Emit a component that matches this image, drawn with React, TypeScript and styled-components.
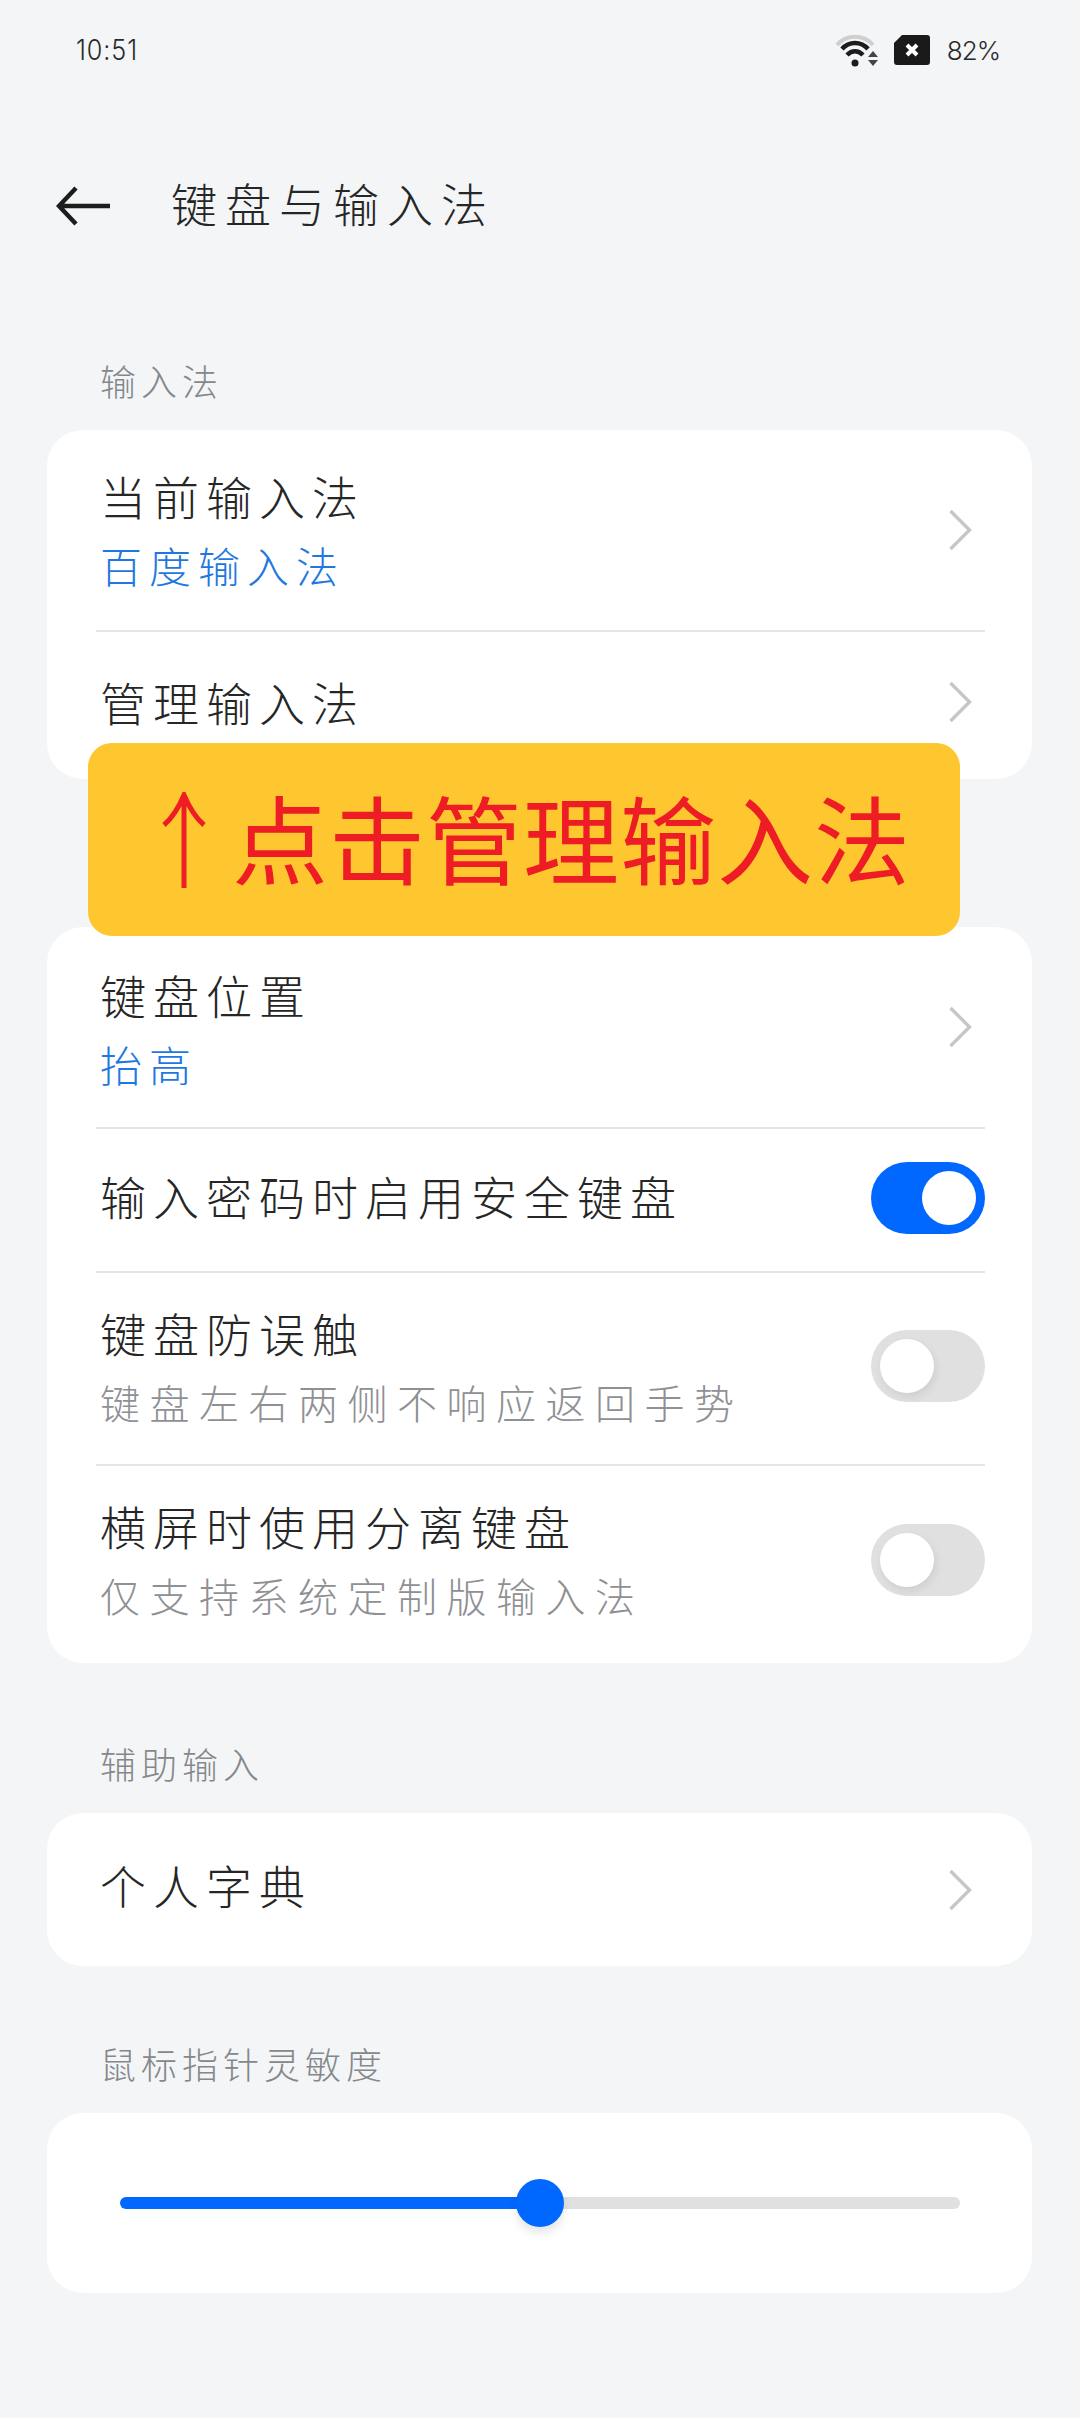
import React from "react";
import styled, { createGlobalStyle } from "styled-components";

const GlobalStyle = createGlobalStyle`
  html, body { margin: 0; padding: 0; background: #f3f5f7; }
  * { box-sizing: border-box; }
`;

const CJK = `"Noto Sans CJK SC", "Noto Sans", sans-serif`;

const Page = styled.div`
  position: relative;
  width: 1080px;
  height: 2418px;
  overflow: hidden;
  background: #f3f5f7;
  font-family: ${CJK};
  font-weight: 300;
`;

const StatusBar = styled.div`
  height: 100px;
  padding: 0 80px 0 76px;
  display: flex;
  align-items: center;
  justify-content: space-between;
  font-family: "Inter", "Liberation Sans", sans-serif;
  font-weight: 300;
  color: #2a2a2a;
`;

const Time = styled.span`
  font-size: 28px;
  letter-spacing: 1px;
  transform: scaleX(0.9);
  transform-origin: left center;
`;

const StatusIcons = styled.div`
  display: flex;
  align-items: center;
  gap: 15px;
`;

const Battery = styled.span`
  font-size: 26px;
  letter-spacing: -1px;
  margin-left: 2px;
`;

const Header = styled.header`
  height: 212px;
  padding: 0 0 0 56px;
  display: flex;
  align-items: center;
  gap: 61px;
`;

const Title = styled.h1`
  margin: 0 0 8px;
  font-size: 46px;
  font-weight: 300;
  line-height: 60px;
  letter-spacing: 8px;
  color: #262626;
`;

const Content = styled.main`
  padding: 0 48px 0 47px;
`;

const SectionLabel = styled.div<{ $height: number }>`
  height: ${(p) => p.$height}px;
  display: flex;
  align-items: flex-end;
  padding: 0 0 30px 53px;
  font-size: 36px;
  line-height: 40px;
  letter-spacing: 5px;
  color: #85888b;
`;

const Card = styled.section`
  background: #ffffff;
  border-radius: 36px;
  padding: 0 47px 0 49px;
`;

const Row = styled.div<{ $height: number; $divider?: boolean }>`
  height: ${(p) => p.$height}px;
  display: flex;
  align-items: center;
  justify-content: space-between;
  padding-left: 4px;
  border-top: ${(p) => (p.$divider ? "2px solid #e6e6e6" : "none")};
`;

const RowText = styled.div<{ $shift?: number }>`
  display: flex;
  flex-direction: column;
  gap: 19px;
  margin-bottom: ${(p) => 11 - (p.$shift ?? 0)}px;
`;

const RowTitle = styled.div`
  font-size: 46px;
  line-height: 52px;
  letter-spacing: 7px;
  color: #262626;
`;

const RowValue = styled.div`
  font-size: 42px;
  line-height: 50px;
  letter-spacing: 7px;
  color: #1f78e0;
`;

const RowHint = styled.div`
  font-size: 40px;
  line-height: 50px;
  letter-spacing: 9.5px;
  color: #8e9093;
`;

const ChevronWrap = styled.svg<{ $lift: number }>`
  width: 24px;
  height: 42px;
  margin: 0 13px ${(p) => p.$lift}px 0;
  flex: none;
`;

const Switch = styled.div<{ $on?: boolean; $lift: number }>`
  width: 114px;
  height: 72px;
  flex: none;
  padding: 9px;
  margin-bottom: ${(p) => p.$lift}px;
  border-radius: 36px;
  display: flex;
  justify-content: ${(p) => (p.$on ? "flex-end" : "flex-start")};
  background: ${(p) => (p.$on ? "#0068ff" : "#e0e0e0")};
`;

const SwitchKnob = styled.div<{ $on?: boolean }>`
  width: 54px;
  height: 54px;
  border-radius: 50%;
  background: #ffffff;
  box-shadow: ${(p) => (p.$on ? "none" : "2px 4px 8px rgba(0,0,0,0.08)")};
`;

const SliderCard = styled.section`
  height: 180px;
  background: #ffffff;
  border-radius: 36px;
  padding: 0 72px 0 73px;
  display: flex;
  align-items: center;
`;

const SliderFill = styled.div`
  flex: 1;
  height: 12px;
  margin-right: -4px;
  border-radius: 6px 0 0 6px;
  background: #0068ff;
`;

const SliderRest = styled.div`
  flex: 1;
  height: 12px;
  margin-left: -4px;
  border-radius: 0 6px 6px 0;
  background: #e0e0e0;
`;

const SliderKnob = styled.div`
  position: relative;
  z-index: 1;
  width: 48px;
  height: 48px;
  flex: none;
  border-radius: 50%;
  background: #0068ff;
  box-shadow: 0 6px 10px rgba(0, 0, 0, 0.1);
`;

const Banner = styled.div`
  position: absolute;
  left: 88px;
  top: 743px;
  width: 872px;
  height: 193px;
  border-radius: 24px;
  background: #fec730;
  color: #ee1c25;
  display: flex;
  align-items: center;
  padding-left: 74px;
  gap: 26px;
  font-size: 96px;
  font-weight: 400;
  line-height: 1;
`;

const BannerArrow = styled.svg`
  width: 44px;
  height: 96px;
  flex: none;
`;

const BannerText = styled.span`
  white-space: nowrap;
  letter-spacing: 1px;
  margin-bottom: 8px;
`;

const Chevron = ({ lift = 0 }: { lift?: number }) => (
  <ChevronWrap $lift={lift} viewBox="0 0 24 42" fill="none">
    <polyline points="2.5,2 21.5,21 2.5,40" stroke="#c6c6c6" strokeWidth="3.4" />
  </ChevronWrap>
);

const Toggle = ({ on, lift }: { on?: boolean; lift: number }) => (
  <Switch $on={on} $lift={lift}>
    <SwitchKnob $on={on} />
  </Switch>
);

const App = () => (
  <Page>
    <GlobalStyle />
    <StatusBar>
      <Time>10:51</Time>
      <StatusIcons>
        <svg width="44" height="34" viewBox="0 0 44 34" fill="none">
          <path d="M2 12 C11 1 29 1 38 12" stroke="#cfcfcf" strokeWidth="4" />
          <path d="M7 16 C14 8 26 8 33 16" stroke="#1c1c1c" strokeWidth="4.5" />
          <path d="M12 22 C17 17 23 17 28 22" stroke="#1c1c1c" strokeWidth="4.5" />
          <circle cx="20" cy="30" r="3.5" fill="#1c1c1c" />
          <path d="M38 18 L43 24 L33 24 Z M33 27 L43 27 L38 33 Z" fill="#444" />
        </svg>
        <svg width="36" height="30" viewBox="0 0 36 30">
          <path d="M8 0 H33 Q36 0 36 3 V27 Q36 30 33 30 H3 Q0 30 0 27 V8 Z" fill="#1a1a1a" />
          <path d="M13 10 L23 20 M23 10 L13 20" stroke="#fff" strokeWidth="4" />
        </svg>
        <Battery>82%</Battery>
      </StatusIcons>
    </StatusBar>
    <Header>
      <svg width="54" height="40" viewBox="0 0 54 40" fill="none">
        <path d="M20 2 L3 20 L20 38 M3 20 H54" stroke="#1d1d1d" strokeWidth="4.5" />
      </svg>
      <Title>键盘与输入法</Title>
    </Header>
    <Content>
      <SectionLabel $height={118}>输入法</SectionLabel>
      <Card>
        <Row $height={200}>
          <RowText $shift={9}>
            <RowTitle>当前输入法</RowTitle>
            <RowValue>百度输入法</RowValue>
          </RowText>
          <Chevron />
        </Row>
        <Row $height={149} $divider>
          <RowText $shift={2}>
            <RowTitle>管理输入法</RowTitle>
          </RowText>
          <Chevron lift={8} />
        </Row>
      </Card>
      <SectionLabel $height={148} />
      <Card>
        <Row $height={200}>
          <RowText $shift={14}>
            <RowTitle>键盘位置</RowTitle>
            <RowValue>抬高</RowValue>
          </RowText>
          <Chevron />
        </Row>
        <Row $height={144} $divider>
          <RowText>
            <RowTitle>输入密码时启用安全键盘</RowTitle>
          </RowText>
          <Toggle on lift={4} />
        </Row>
        <Row $height={193} $divider>
          <RowText $shift={6}>
            <RowTitle>键盘防误触</RowTitle>
            <RowHint>键盘左右两侧不响应返回手势</RowHint>
          </RowText>
          <Toggle lift={5} />
        </Row>
        <Row $height={199} $divider>
          <RowText>
            <RowTitle>横屏时使用分离键盘</RowTitle>
            <RowHint>仅支持系统定制版输入法</RowHint>
          </RowText>
          <Toggle lift={9} />
        </Row>
      </Card>
      <SectionLabel $height={150}>辅助输入</SectionLabel>
      <Card>
        <Row $height={153}>
          <RowText>
            <RowTitle>个人字典</RowTitle>
          </RowText>
          <Chevron />
        </Row>
      </Card>
      <SectionLabel $height={147}>鼠标指针灵敏度</SectionLabel>
      <SliderCard>
        <SliderFill />
        <SliderKnob />
        <SliderRest />
      </SliderCard>
    </Content>
    <Banner>
      <BannerArrow viewBox="0 0 44 96" fill="none">
        <path d="M2 33 C10 26 17 15 22 3 C27 15 34 26 42 33 M22 5 V96" stroke="#ee1c25" strokeWidth="5" />
      </BannerArrow>
      <BannerText>点击管理输入法</BannerText>
    </Banner>
  </Page>
);

export default App;
